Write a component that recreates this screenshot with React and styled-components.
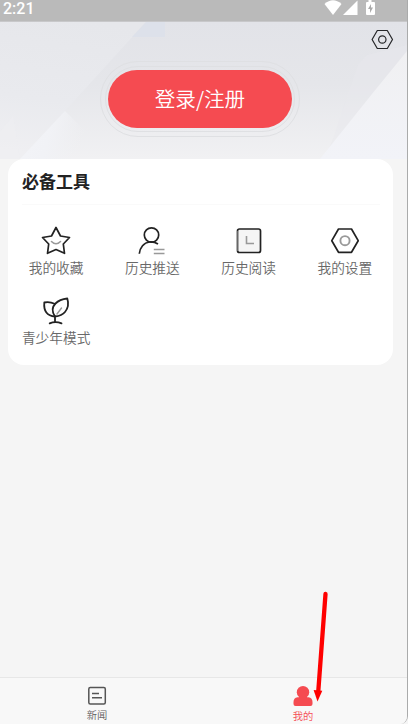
import styled, { createGlobalStyle } from "styled-components"

const GlobalStyle = createGlobalStyle`
  * {
    box-sizing: border-box;
  }

  body {
    margin: 0;
    background-color: #f5f5f5;
    font-family: "Noto Sans CJK SC", sans-serif;
    overflow: hidden;
  }
`

const Screen = styled.div`
  position: relative;
  display: flex;
  flex-direction: column;
  width: 408px;
  height: 724px;
  background-color: #f5f5f5;
  border-right: 1px solid #aaabab;
  border-bottom-right-radius: 8px;
  overflow: hidden;
`

const StatusBar = styled.header`
  display: flex;
  justify-content: space-between;
  height: 22px;
  padding: 0 31px 0 3px;
  background-color: #bababa;
  border-bottom: 1px solid #c8c8ca;
`

const Clock = styled.span`
  color: #fff;
  font-family: Roboto, sans-serif;
  font-size: 16px;
  font-weight: 500;
  line-height: 17px;
`

const Hero = styled.section`
  position: relative;
  flex: none;
  height: 137px;
  padding-top: 39px;
`

const Backdrop = styled.svg`
  position: absolute;
  inset: 0;
`

const SettingsButton = styled.button`
  position: absolute;
  top: 7px;
  right: 13px;
  padding: 0;
  border: none;
  background: none;
  line-height: 0;
`

const LoginRing = styled.div`
  position: relative;
  width: 200px;
  height: 76px;
  margin-left: 100px;
  padding: 4px;
  border: 1px solid #dfe0e3;
  border-radius: 38px;
`

const InnerRing = styled.div`
  height: 66px;
  padding: 3px;
  border: 1px solid #dfe0e3;
  border-radius: 33px;
`

const LoginButton = styled.button`
  display: block;
  width: 184px;
  height: 58px;
  margin: 0 -1px;
  padding: 0 0 2px;
  border: none;
  border-radius: 29px;
  background-color: #f54b51;
  color: #fff;
  font-family: inherit;
  font-size: 20.6px;
  font-weight: 350;
  line-height: 56px;
`

const Card = styled.section`
  width: 385px;
  height: 206px;
  margin-left: 8px;
  background-color: #fff;
  border-radius: 16px;
`

const CardTitle = styled.h2`
  height: 46px;
  margin: 0 13px 0 14px;
  border-bottom: 1px solid #fafafa;
  color: #222;
  font-size: 17px;
  font-weight: 700;
  line-height: 43px;
`

const ToolGrid = styled.div`
  display: grid;
  grid-template-columns: repeat(4, 1fr);
  grid-auto-rows: 70px;
  padding-top: 19px;
`

const Tool = styled.div`
  display: flex;
  flex-direction: column;
  align-items: center;
  color: #686868;
  font-size: 13.7px;
  font-weight: 350;
  line-height: 23px;
  white-space: nowrap;
`

const TabBar = styled.nav`
  display: grid;
  grid-template-columns: 194px 1fr;
  height: 47px;
  margin-top: auto;
  background-color: #f8f8f8;
  border-top: 1px solid #e7e7e7;
`

const Tab = styled.div`
  display: flex;
  flex-direction: column;
  align-items: center;
  padding-top: 7px;
  padding-left: ${(props) => (props.$active ? "5px" : "0")};
  color: ${(props) => (props.$active ? "#f54b51" : "#606060")};
  font-size: 10.3px;
  font-weight: 350;
  line-height: ${(props) => (props.$active ? "18px" : "16px")};
`

const Pointer = styled.svg`
  position: absolute;
  left: 310px;
  top: 590px;
`

const StatusIcons = () => (
  <svg width="52" height="17" viewBox="0 0 52 17" fill="#fff">
    <path d="M0.5 4 Q9-3.5 17.5 4 L9 15Z" />
    <path d="M19 15 L33.500 0.5 V15Z" />
    <path d="M44.500 0h3v2H50q1 0 1 1v11q0 1-1 1h-7q-1 0-1-1V3q0-1 1-1h1.500z" />
    <path d="M47 4l-3 5h2v4l3-5.500h-2z" fill="#aaa" />
  </svg>
)

const HeroBackdrop = () => (
  <Backdrop width="407" height="137" viewBox="0 0 407 137">
    <defs>
      <linearGradient id="base" x1="0" y1="0" x2="0" y2="1">
        <stop offset="0" stopColor="#e2e3e8" />
        <stop offset="0.45" stopColor="#e5e6ea" />
        <stop offset="1" stopColor="#f1f1f3" />
      </linearGradient>
      <linearGradient id="left" gradientUnits="userSpaceOnUse" x1="90" y1="0" x2="70" y2="137">
        <stop offset="0" stopColor="#e6e7eb" />
        <stop offset="0.6" stopColor="#e9eaee" />
        <stop offset="1" stopColor="#efeff2" />
      </linearGradient>
      <linearGradient id="facet" x1="0" y1="0" x2="1" y2="0.2">
        <stop offset="0" stopColor="#f3f4f8" />
        <stop offset="0.5" stopColor="#f1f2f6" />
        <stop offset="1" stopColor="#f0f1f4" stopOpacity="0" />
      </linearGradient>
      <linearGradient id="right" x1="0" y1="0" x2="0" y2="1">
        <stop offset="0" stopColor="#f0f0f2" />
        <stop offset="1" stopColor="#f2f3f8" />
      </linearGradient>
    </defs>
    <rect width="407" height="137" fill="url(#base)" />
    <path d="M0 0H146L64 90L20 137H0Z" fill="url(#left)" />
    <path d="M146 0H165V15H132Z" fill="#dde1ea" />
    <path d="M0 110L13 94L20 137H0Z" fill="#eeeff2" opacity="0.6" />
    <path d="M65 89L20 137H78L88 112Z" fill="url(#facet)" />
    <path d="M358 43L367 33L407 23V50L330 125Z" fill="#e8e9ee" opacity="0.4" />
    <path d="M407 29L372 72L320 137H407Z" fill="url(#right)" />
  </Backdrop>
)

const HeaderHexIcon = () => (
  <svg width="24" height="22" viewBox="0 0 24 22" fill="none" stroke="#252628" strokeWidth="1.200">
    <path d="M7.300 1.500H17.300L22.500 10.500L17.300 19.500H7.300L2.100 10.500Z" strokeLinejoin="round" />
    <circle cx="12.300" cy="10.500" r="3.700" />
  </svg>
)

const StarIcon = () => (
  <svg width="32" height="32" viewBox="0 0 32 32" fill="none" strokeLinecap="round" strokeLinejoin="round">
    <path d="M16 3.500L20.500 12L29.500 13.500L23.300 20L24.500 29.300L16 25.500L7.500 29.300L8.700 20L2.500 13.500L11.500 12Z" stroke="#222" strokeWidth="1.700" />
    <path d="M11.500 17.500Q16 22 20.500 17.500" stroke="#999" strokeWidth="1.600" />
  </svg>
)

const PushIcon = () => (
  <svg width="32" height="32" viewBox="0 0 32 32" fill="none" strokeWidth="1.700">
    <circle cx="15.500" cy="11" r="7.200" stroke="#222" />
    <path d="M3.300 29.800C3.800 23.500 8 18.500 13.500 18Q18 17.500 22 20" stroke="#222" />
    <path d="M17.800 25.500H28.500M17.800 29.500H28.500" stroke="#999" strokeWidth="1.400" />
  </svg>
)

const HistoryIcon = () => (
  <svg width="32" height="32" viewBox="0 0 32 32" fill="none">
    <rect x="4.500" y="5" width="23" height="23.500" rx="2" fill="#f5f5f5" stroke="#222" strokeWidth="1.700" />
    <path d="M5 7V27" stroke="#aaa" strokeWidth="1" />
    <path d="M13.500 12V19.500H21" stroke="#999" strokeWidth="1.600" />
  </svg>
)

const HexIcon = () => (
  <svg width="32" height="32" viewBox="0 0 32 32" fill="none">
    <path d="M9.500 5H22.500L29.200 16.700L22.500 28.300H9.500L2.800 16.700Z" stroke="#222" strokeWidth="1.700" strokeLinejoin="round" />
    <circle cx="16" cy="16.700" r="4.600" stroke="#999" strokeWidth="1.900" />
  </svg>
)

const SproutIcon = () => (
  <svg width="32" height="32" viewBox="0 0 32 32" fill="none" stroke="#222" strokeWidth="1.800" strokeLinecap="round" strokeLinejoin="round">
    <path d="M15 22.500C7 22 3.500 17 4.300 8.500C8 7.800 11.500 8.300 14.500 9.800" />
    <path d="M15 22.500C12 18 12 13 15.500 9.500C18.500 6.500 23 5 27.300 4.500C29 10 27.500 15 25 18C23 20.500 20 22 15 22.500V27.500" />
    <path d="M9.700 29.300Q15.500 26.800 21.500 29.300" />
    <path d="M21.500 14L17 20" stroke="#999" strokeWidth="1.400" />
  </svg>
)

const NewsIcon = () => (
  <svg width="20" height="22" viewBox="0 0 20 22" fill="none" stroke="#555" strokeWidth="1.500">
    <rect x="1.800" y="2.600" width="16.500" height="16.500" rx="1.500" />
    <path d="M5 8.500H12M5 12.700H15" />
  </svg>
)

const MineIcon = () => (
  <svg width="20" height="22" viewBox="0 0 20 22" fill="currentColor">
    <circle cx="10" cy="7.200" r="6.200" />
    <path d="M6 11H14V12.300H15.500Q19.500 13 19.500 17V19Q19.500 21 17.500 21H2.500Q0.500 21 0.500 19V17Q0.500 13 4.500 12.300H6Z" />
  </svg>
)

const tools = [
  { label: "我的收藏", Icon: StarIcon },
  { label: "历史推送", Icon: PushIcon },
  { label: "历史阅读", Icon: HistoryIcon },
  { label: "我的设置", Icon: HexIcon },
  { label: "青少年模式", Icon: SproutIcon },
]

export default function App() {
  return (
    <>
      <GlobalStyle />
      <Screen>
        <StatusBar>
          <Clock>2:21</Clock>
          <StatusIcons />
        </StatusBar>

        <Hero>
          <HeroBackdrop />
          <SettingsButton aria-label="设置">
            <HeaderHexIcon />
          </SettingsButton>
          <LoginRing>
            <InnerRing>
              <LoginButton>登录/注册</LoginButton>
            </InnerRing>
          </LoginRing>
        </Hero>

        <Card>
          <CardTitle>必备工具</CardTitle>
          <ToolGrid>
            {tools.map(({ label, Icon }) => (
              <Tool key={label}>
                <Icon />
                {label}
              </Tool>
            ))}
          </ToolGrid>
        </Card>

        <TabBar>
          <Tab>
            <NewsIcon />
            新闻
          </Tab>
          <Tab $active>
            <MineIcon />
            我的
          </Tab>
        </TabBar>

        <Pointer width="20" height="114" viewBox="0 0 20 114">
          <path d="M15.500 4L8.300 101" stroke="#f00" strokeWidth="4.300" strokeLinecap="round" />
          <path d="M3.600 100L12.300 100.700L7.500 111.500Z" fill="#f00" />
        </Pointer>
      </Screen>
    </>
  )
}
